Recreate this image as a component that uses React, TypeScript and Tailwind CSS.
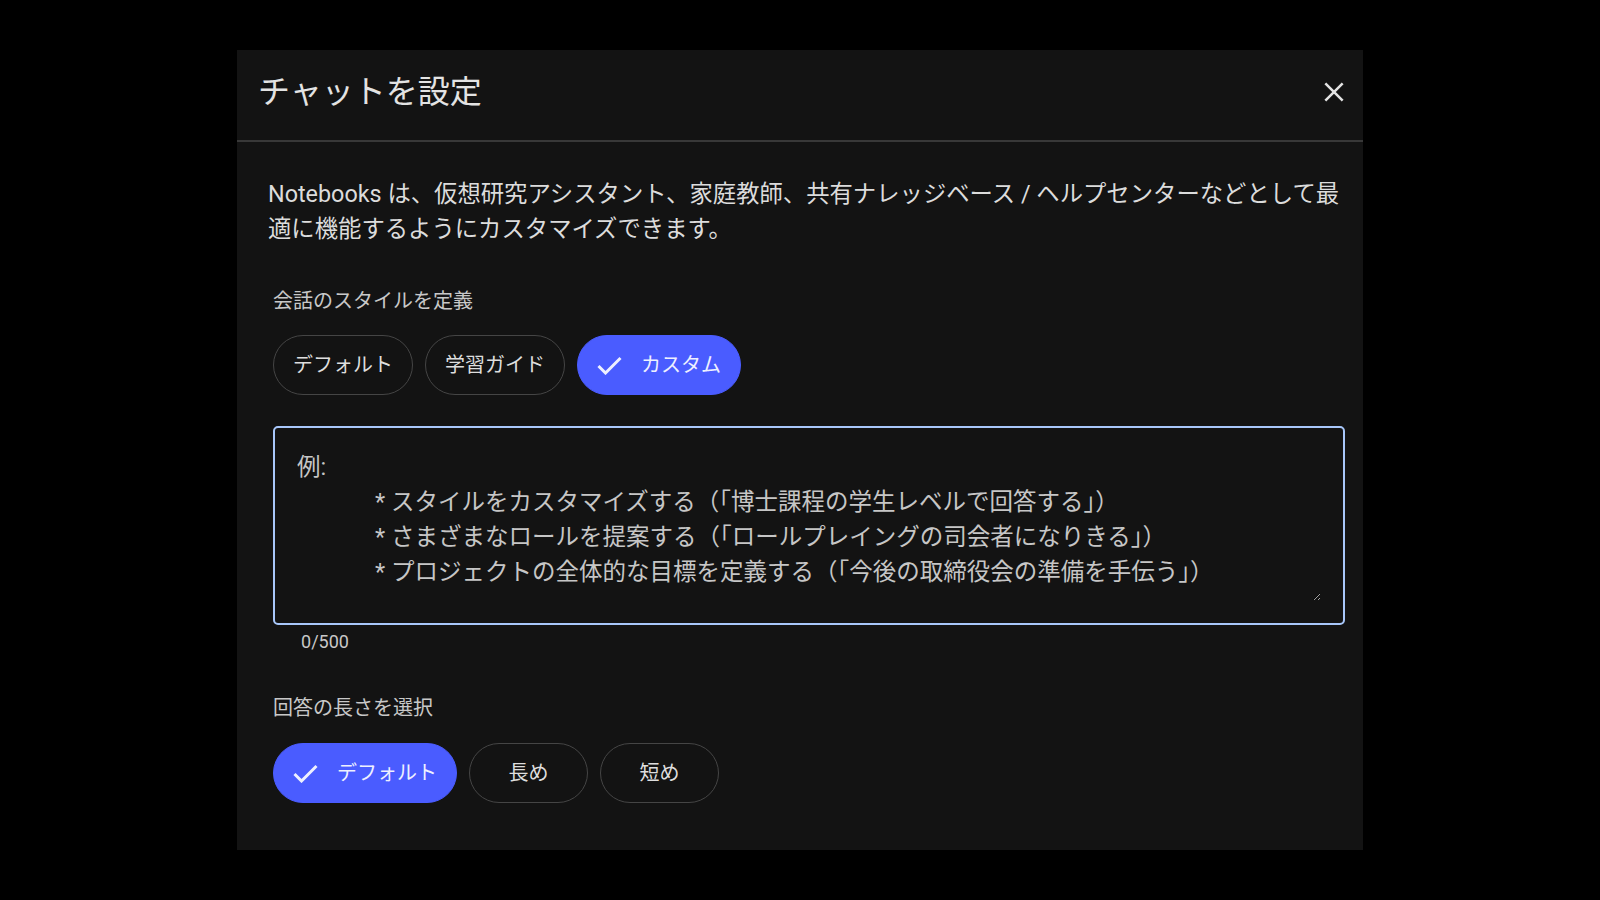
import { useState } from "react";

const PLACEHOLDER =
  "例:\n" +
  "\t* スタイルをカスタマイズする（「博士課程の学生レベルで回答する」）\n" +
  "\t* さまざまなロールを提案する（「ロールプレイングの司会者になりきる」）\n" +
  "\t* プロジェクトの全体的な目標を定義する（「今後の取締役会の準備を手伝う」）";

function CheckMark() {
  return (
    <svg width="25" height="19" viewBox="0 0 25 19" fill="none" className="shrink-0">
      <polyline points="1.5,10 8.5,17 23.5,2" stroke="currentColor" strokeWidth="3" />
    </svg>
  );
}

function Chip({
  label,
  selected,
  onClick,
}: {
  label: string;
  selected: boolean;
  onClick: () => void;
}) {
  if (selected) {
    return (
      <button
        onClick={onClick}
        className="h-[60px] flex items-center gap-[19px] px-[19px] rounded-full bg-[#4a5cff] text-[#eef0ff] text-[20px] border border-[#4a5cff]"
      >
        <CheckMark />
        <span>{label}</span>
      </button>
    );
  }
  return (
    <button
      onClick={onClick}
      className="h-[60px] min-w-[119px] flex items-center justify-center px-[19px] rounded-full border border-[#454545] text-[#dedede] text-[20px]"
    >
      {label}
    </button>
  );
}

export default function App() {
  const [style, setStyle] = useState("カスタム");
  const [length, setLength] = useState("デフォルト");
  const [text, setText] = useState("");

  return (
    <div className="h-screen w-full bg-black flex items-center justify-center font-[family-name:Roboto,'Noto_Sans_CJK_JP',sans-serif]">
      <div className="w-[1126px] h-[800px] bg-[#131313] flex flex-col">
        <div className="h-[92px] shrink-0 flex items-center justify-between pl-[21px] pr-[13px] pb-[6px] border-b-2 border-[#383838]">
          <h1 className="text-[32px] text-[#e3e3e3] leading-none">チャットを設定</h1>
          <button className="w-8 h-8 flex items-center justify-center text-[#e3e3e3]">
            <svg width="32" height="32" viewBox="0 0 24 24" fill="none">
              <path d="M5.5 5.5L18.5 18.5M18.5 5.5L5.5 18.5" stroke="currentColor" strokeWidth="1.9" />
            </svg>
          </button>
        </div>

        <div className="flex flex-col pl-[31px] pr-[18px] pt-[35px]">
          <p className="text-[23.35px] leading-[35px] text-[#dcdcdc]">
            <span className="whitespace-nowrap">
              Notebooks は、仮想研究アシスタント、家庭教師、共有ナレッジベース / ヘルプセンターなどとして最
            </span>
            <br />
            適に機能するようにカスタマイズできます。
          </p>

          <div className="pl-[5px] flex flex-col">
            <h2 className="mt-[40px] text-[20px] leading-[28px] text-[#c8c8c8]">会話のスタイルを定義</h2>
            <div className="mt-[20px] flex gap-3">
              {["デフォルト", "学習ガイド", "カスタム"].map((s) => (
                <Chip key={s} label={s} selected={style === s} onClick={() => setStyle(s)} />
              ))}
            </div>

            <div className="mt-[31px] h-[199px] rounded-[5px] border-2 border-[#a8c7fa] p-[22px]">
              <textarea
                value={text}
                onChange={(e) => setText(e.target.value.slice(0, 500))}
                placeholder={PLACEHOLDER}
                className="w-full h-[151px] bg-transparent outline-none text-[23.5px] leading-[35px] [tab-size:78px] text-[#e3e3e3] placeholder:text-[#c6c6c6] [color-scheme:dark]"
              />
            </div>
            <div className="mt-[7px] pl-[28px] text-[18px] leading-[20px] text-[#c8c8c8]">
              {text.length}/500
            </div>

            <h2 className="mt-[42px] text-[20px] leading-[28px] text-[#c8c8c8]">回答の長さを選択</h2>
            <div className="mt-[21px] flex gap-3">
              {["デフォルト", "長め", "短め"].map((s) => (
                <Chip key={s} label={s} selected={length === s} onClick={() => setLength(s)} />
              ))}
            </div>
          </div>
        </div>
      </div>
    </div>
  );
}
